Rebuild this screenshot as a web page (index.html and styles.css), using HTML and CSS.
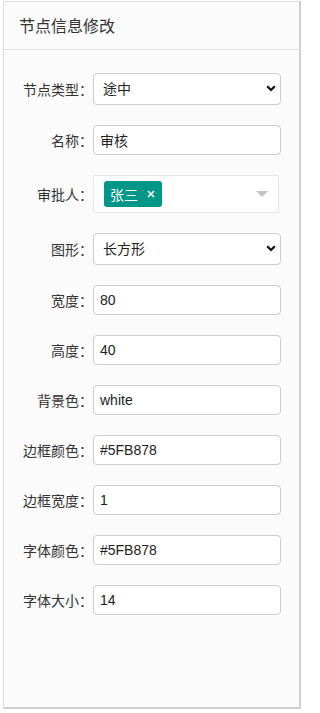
FILE: index.html
```html
<!DOCTYPE html>
<html lang="zh">
<head>
<meta charset="utf-8">
<title>节点信息修改</title>
<link rel="stylesheet" href="styles.css">
</head>
<body>
<div class="page">
  <div class="panel">
    <div class="panel-header">节点信息修改</div>
    <form class="panel-body">
      <div class="row">
        <label class="label">节点类型：</label>
        <div class="select-wrap">
          <select class="control select"><option>途中</option></select>
          <svg class="chev" width="10" height="7" viewBox="0 0 10 7"><path d="M1.2 1.3 L5 5 L8.8 1.3" fill="none" stroke="#111" stroke-width="2.2"/></svg>
        </div>
      </div>
      <div class="row">
        <label class="label">名称：</label>
        <input class="control input" type="text" value="审核">
      </div>
      <div class="row">
        <label class="label">审批人：</label>
        <div class="multi">
          <span class="tag">张三<svg class="tag-x" width="8" height="8" viewBox="0 0 8 8"><path d="M1 1 L7 7 M7 1 L1 7" stroke="#fff" stroke-width="1.6"/></svg></span>
          <svg class="tri" width="12" height="6" viewBox="0 0 12 6"><path d="M0 0 H12 L6 6 Z" fill="#c2c2c2"/></svg>
        </div>
      </div>
      <div class="row">
        <label class="label">图形：</label>
        <div class="select-wrap">
          <select class="control select"><option>长方形</option></select>
          <svg class="chev" width="10" height="7" viewBox="0 0 10 7"><path d="M1.2 1.3 L5 5 L8.8 1.3" fill="none" stroke="#111" stroke-width="2.2"/></svg>
        </div>
      </div>
      <div class="row">
        <label class="label">宽度：</label>
        <input class="control input" type="text" value="80">
      </div>
      <div class="row">
        <label class="label">高度：</label>
        <input class="control input" type="text" value="40">
      </div>
      <div class="row">
        <label class="label">背景色：</label>
        <input class="control input" type="text" value="white">
      </div>
      <div class="row">
        <label class="label">边框颜色：</label>
        <input class="control input" type="text" value="#5FB878">
      </div>
      <div class="row">
        <label class="label">边框宽度：</label>
        <input class="control input" type="text" value="1">
      </div>
      <div class="row">
        <label class="label">字体颜色：</label>
        <input class="control input" type="text" value="#5FB878">
      </div>
      <div class="row">
        <label class="label">字体大小：</label>
        <input class="control input" type="text" value="14">
      </div>
    </form>
  </div>
</div>
</body>
</html>
```

FILE: styles.css
```css
html, body {
  margin: 0;
  padding: 0;
  background: #ffffff;
}
body {
  font-family: "Liberation Sans", "Noto Sans CJK SC", sans-serif;
  color: #333;
}
.page {
  padding: 1px 2px 0 3px;
}
.panel {
  box-sizing: border-box;
  width: 298px;
  height: 708px;
  background: #fbfbfb;
  border: 1px solid #dcdcdc;
  border-right: 2px solid #cfcfcf;
  border-bottom: 2px solid #cfcfcf;
  display: flex;
  flex-direction: column;
}
.panel-header {
  height: 47px;
  border-bottom: 1px solid #e2e2e2;
  padding-left: 15px;
  font-family: "Noto Sans CJK SC", sans-serif;
  font-size: 16px;
  line-height: 46px;
  color: #333;
}
.panel-body {
  margin: 0;
  padding-top: 23px;
  display: flex;
  flex-direction: column;
  gap: 20px;
}
.row {
  display: flex;
  align-items: center;
}
.label {
  width: 89px;
  text-align: right;
  font-family: "Noto Sans CJK SC", sans-serif;
  font-size: 14px;
  color: #333;
  white-space: nowrap;
}
.control {
  box-sizing: border-box;
  width: 188px;
  margin: 0;
  background: #fff;
  border: 1px solid #cccccc;
  border-radius: 4px;
  font-family: "Liberation Sans", "Noto Sans CJK SC", sans-serif;
  font-size: 14px;
  color: #222;
  outline: none;
}
.input {
  height: 30px;
  padding: 0 6px;
}
.select-wrap {
  position: relative;
  display: flex;
}
.select {
  height: 32px;
  padding: 0 0 0 9px;
  appearance: none;
  -webkit-appearance: none;
}
.chev {
  position: absolute;
  right: 5px;
  top: 12px;
  pointer-events: none;
}
.multi {
  box-sizing: border-box;
  width: 186px;
  height: 38px;
  background: #fff;
  border: 1px solid #e6e6e6;
  border-radius: 2px;
  display: flex;
  align-items: center;
  justify-content: space-between;
  padding: 0 10px 0 10px;
}
.tag {
  box-sizing: border-box;
  width: 58px;
  height: 26px;
  background: #009688;
  border-radius: 3px;
  color: #fff;
  font-family: "Noto Sans CJK SC", sans-serif;
  font-size: 14px;
  line-height: 26px;
  padding-left: 6px;
  display: flex;
  align-items: center;
  gap: 9px;
}
.tag-x {
  display: block;
}
.tri {
  display: block;
}
```
